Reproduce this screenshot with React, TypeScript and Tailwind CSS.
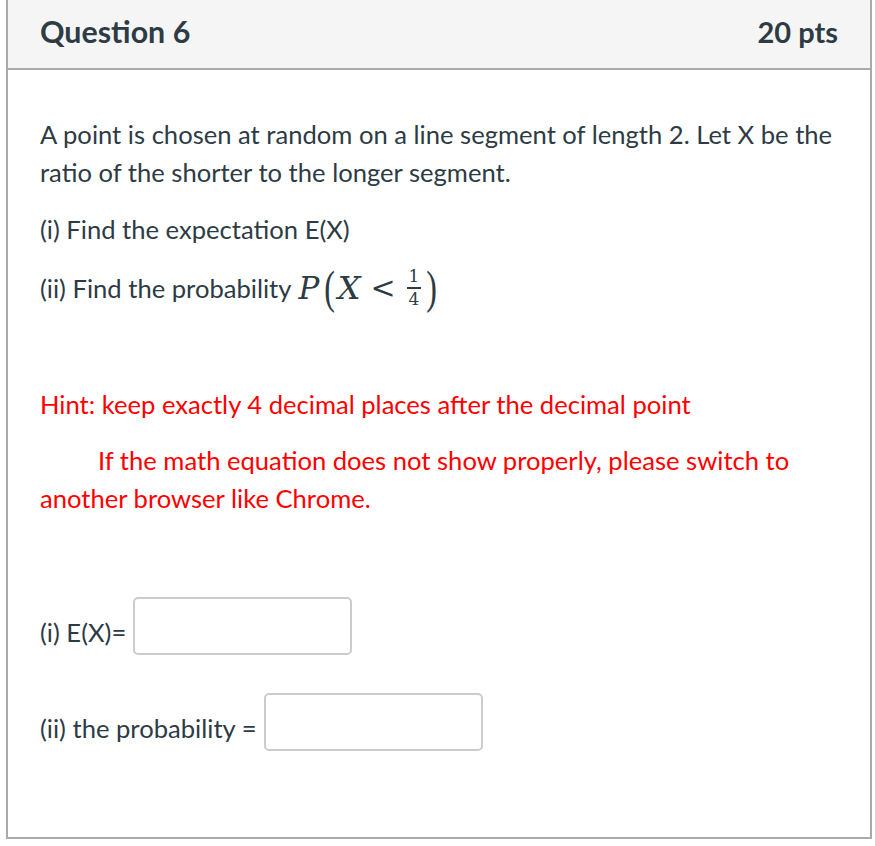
import React from "react";

// Quiz question card (Canvas style)

function Fraction() {
  return (
    <span className="inline-flex flex-col items-center align-middle mx-[2px] leading-none text-[17px] not-italic" style={{ fontFamily: '"DejaVu Serif", serif' }}>
      <span className="px-[2px]">1</span>
      <span className="block w-full h-[1.5px] bg-[#2d3b45] my-[2px]" />
      <span className="px-[2px]">4</span>
    </span>
  );
}

function MathExpr() {
  return (
    <span className="inline-flex items-center ml-[7px] h-[44px] align-middle" style={{ fontFamily: '"DejaVu Serif", "Liberation Serif", serif' }}>
      <span className="italic text-[31px]">P</span>
      <span className="text-[40px] font-light ml-[4px] leading-none scale-y-[1.15] scale-x-[0.8] inline-block" style={{ fontFamily: '"Liberation Serif", serif' }}>(</span>
      <span className="italic text-[32px] ml-[1px]">X</span>
      <span className="text-[30px] ml-[10px] mr-[9px]">&lt;</span>
      <Fraction />
      <span className="text-[40px] font-light ml-[2px] leading-none scale-y-[1.15] scale-x-[0.8] inline-block" style={{ fontFamily: '"Liberation Serif", serif' }}>)</span>
    </span>
  );
}

export default function App() {
  return (
    <div className="pl-[6px] pr-[3px] bg-white text-[#2d3b45]" style={{ fontFamily: 'Lato, "Open Sans", sans-serif' }}>
      <div className="border-x-2 border-b-2 border-[#aaaaaa] w-[866px]">
        <div className="h-[70px] bg-[#f5f5f5] border-b-2 border-[#aaaaaa] flex items-center justify-between px-[32px] pb-[4px]">
          <h2 className="text-[30.4px] font-bold">Question 6</h2>
          <span className="text-[29px] font-bold">20 pts</span>
        </div>

        <div className="px-[32px] pt-[45px] pb-[86px] text-[25.6px] leading-[38.4px]">
          <p>A point is chosen at random on a line segment of length 2. Let X be the ratio of the shorter to the longer segment.</p>
          <p className="mt-[18px]">(i) Find the expectation E(X)</p>
          <p className="mt-[18px] flex items-center h-[44px]">
            (ii) Find the probability
            <MathExpr />
          </p>
          <p className="mt-[18px]">&nbsp;</p>
          <p className="mt-[18px] text-[#ff0000]">Hint: keep exactly 4 decimal places after the decimal point</p>
          <p className="mt-[18px] text-[#ff0000] indent-[58px]">If the math equation does not show properly, please switch to another browser like Chrome.</p>

          <div className="mt-[79px] flex items-center">
            <span className="mt-[12px]">(i) E(X)=</span>
            <input type="text" className="ml-[7px] w-[219px] h-[58px] border-2 border-[#cccccc] rounded-[5px] bg-white" />
          </div>
          <div className="mt-[38px] flex items-center">
            <span className="mt-[12px]">(ii) the probability =</span>
            <input type="text" className="ml-[7px] w-[219px] h-[58px] border-2 border-[#cccccc] rounded-[5px] bg-white" />
          </div>
        </div>
      </div>
    </div>
  );
}
